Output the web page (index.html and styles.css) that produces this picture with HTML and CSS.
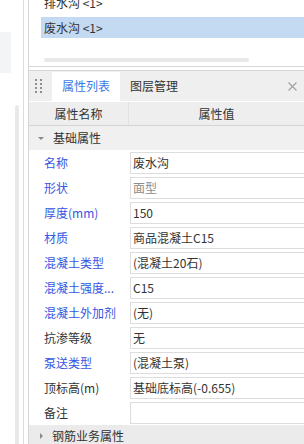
FILE: index.html
```html
<!DOCTYPE html>
<html>
	<head>
		<meta charset="UTF-8">
		<title>属性列表</title>
		<link rel="stylesheet" href="styles.css">
	</head>
	<body>
		<div class="app">
			<div class="side">
				<div class="side-box"></div>
				<div class="side-bar"></div>
			</div>
			<div class="side-gap"></div>
			<div class="main">
				<div class="top-panel">
					<ul class="layer-list">
						<li>排水沟 &lt;1&gt;</li>
						<li class="ac">废水沟 &lt;1&gt;</li>
					</ul>
					<div class="hscroll"></div>
				</div>
				<div class="prop-panel">
					<div class="tabbar">
						<span class="grip">
							<svg width="8" height="16" viewBox="0 0 8 16">
								<rect x="0" y="0" width="2" height="2" fill="#8e8e8e"/>
								<rect x="5" y="0" width="2" height="2" fill="#8e8e8e"/>
								<rect x="0" y="4" width="2" height="2" fill="#8e8e8e"/>
								<rect x="5" y="4" width="2" height="2" fill="#8e8e8e"/>
								<rect x="0" y="8" width="2" height="2" fill="#8e8e8e"/>
								<rect x="5" y="8" width="2" height="2" fill="#8e8e8e"/>
								<rect x="0" y="12" width="2" height="2" fill="#8e8e8e"/>
								<rect x="5" y="12" width="2" height="2" fill="#8e8e8e"/>
							</svg>
						</span>
						<span class="tab ac">属性列表</span>
						<span class="tab">图层管理</span>
						<span class="close">
							<svg width="9" height="9" viewBox="0 0 9 9">
								<path d="M0.5 0.5 L8.5 8.5 M8.5 0.5 L0.5 8.5" stroke="#a0a0a0" stroke-width="1.1" fill="none"/>
							</svg>
						</span>
					</div>
					<div class="head">
						<div class="head-name">属性名称</div>
						<div class="head-value">属性值</div>
					</div>
					<div class="group">
						<span class="arrow-down"></span>基础属性
					</div>
					<div class="row">
						<div class="name blue">名称</div>
						<div class="value">废水沟</div>
					</div>
					<div class="row">
						<div class="name blue">形状</div>
						<div class="value gray">面型</div>
					</div>
					<div class="row">
						<div class="name blue">厚度(mm)</div>
						<div class="value">150</div>
					</div>
					<div class="row">
						<div class="name blue">材质</div>
						<div class="value">商品混凝土C15</div>
					</div>
					<div class="row">
						<div class="name blue">混凝土类型</div>
						<div class="value">(混凝土20石)</div>
					</div>
					<div class="row">
						<div class="name blue">混凝土强度...</div>
						<div class="value">C15</div>
					</div>
					<div class="row">
						<div class="name blue">混凝土外加剂</div>
						<div class="value">(无)</div>
					</div>
					<div class="row">
						<div class="name">抗渗等级</div>
						<div class="value">无</div>
					</div>
					<div class="row">
						<div class="name blue">泵送类型</div>
						<div class="value">(混凝土泵)</div>
					</div>
					<div class="row">
						<div class="name">顶标高(m)</div>
						<div class="value">基础底标高(-0.655)</div>
					</div>
					<div class="row">
						<div class="name">备注</div>
						<div class="value"></div>
					</div>
					<div class="group group-dark">
						<span class="arrow-right"></span>钢筋业务属性
					</div>
				</div>
			</div>
		</div>
	</body>
</html>
```

FILE: styles.css
```css
* {
	margin: 0;
	padding: 0;
	box-sizing: border-box;
}

li {
	list-style: none;
}

body {
	width: 304px;
	height: 444px;
	overflow: hidden;
	background: #fff;
	font-family: "Noto Sans CJK SC", "Microsoft YaHei", sans-serif;
	font-size: 12px;
	color: #333;
}

.app {
	display: flex;
	height: 444px;
}

/* left strip */
.side {
	width: 24px;
	flex: none;
	display: flex;
	flex-direction: column;
	border-right: 1px solid #dcdcdc;
}

.side-box {
	width: 11px;
	height: 41px;
	margin-top: 32px;
	background: #f3f4f6;
}

.side-bar {
	width: 4px;
	flex: 1;
	margin: 32px 0 0 15px;
	background: #e9e9e9;
	border-radius: 2px 2px 0 0;
}

.side-gap {
	width: 4px;
	flex: none;
}

.main {
	flex: 1;
	display: flex;
	flex-direction: column;
	border-left: 1px solid #d6d6d6;
	overflow: hidden;
}

/* layer list */
.top-panel {
	height: 67px;
	flex: none;
	display: flex;
	flex-direction: column;
	border-bottom: 1px solid #d6d6d6;
	overflow: hidden;
}

.layer-list {
	margin: -8px 0 0 12px;
}

.layer-list li {
	height: 21px;
	line-height: 21px;
	padding-left: 3px;
	margin-bottom: 4px;
	white-space: nowrap;
}

.layer-list li.ac {
	background: #c4daf2;
}

.hscroll {
	width: 205px;
	height: 4px;
	margin: auto 0 4px 15px;
	background: #e8e8e8;
	border-radius: 2px;
}

/* property panel */
.prop-panel {
	flex: 1;
	margin-top: 3px;
	border-top: 1px solid #d6d6d6;
	background: #fff;
}

.tabbar {
	height: 31px;
	display: flex;
	align-items: flex-end;
	padding-top: 1px;
	background: #efefef;
	border-bottom: 1px solid #fff;
}

.grip {
	width: 23px;
	height: 29px;
	display: flex;
	align-items: center;
	padding-left: 6px;
}

.grip svg {
	display: block;
}

.tab {
	height: 29px;
	line-height: 27px;
	padding: 0 10px;
	color: #333;
}

.tab.ac {
	background: #fff;
	color: #3c7be6;
}

.close {
	margin-left: auto;
	height: 29px;
	display: flex;
	align-items: center;
	padding-right: 7px;
}

.close svg {
	display: block;
}

.head {
	display: flex;
	height: 24px;
	line-height: 23px;
	background: #eeeeee;
	border-bottom: 1px solid #d4d4d4;
}

.head-name {
	width: 100px;
	text-align: center;
	border-right: 1px solid #e2e2e2;
}

.head-value {
	flex: 1;
	text-align: center;
}

.group {
	height: 24px;
	line-height: 24px;
	padding-left: 9px;
	background: #f0f0f0;
	display: flex;
	align-items: center;
}

.group-dark {
	height: 22px;
	background: #ebebeb;
}

.arrow-down {
	width: 0;
	height: 0;
	border-left: 3px solid transparent;
	border-right: 3px solid transparent;
	border-top: 3px solid #8a8a8a;
	margin-right: 9px;
}

.arrow-right {
	width: 0;
	height: 0;
	border-top: 3px solid transparent;
	border-bottom: 3px solid transparent;
	border-left: 3px solid #8a8a8a;
	margin: 0 9px 0 2px;
}

.row {
	display: flex;
	height: 25px;
	padding: 2px 0 1px;
}

.name {
	width: 101px;
	flex: none;
	padding-left: 15px;
	line-height: 22px;
	white-space: nowrap;
	overflow: hidden;
}

.name.blue {
	color: #3556e2;
}

.value {
	flex: 1;
	height: 22px;
	line-height: 20px;
	padding-left: 2px;
	margin-right: -4px;
	border: 1px solid #dddddd;
	white-space: nowrap;
}

.value.gray {
	color: #8c8c8c;
}
```
